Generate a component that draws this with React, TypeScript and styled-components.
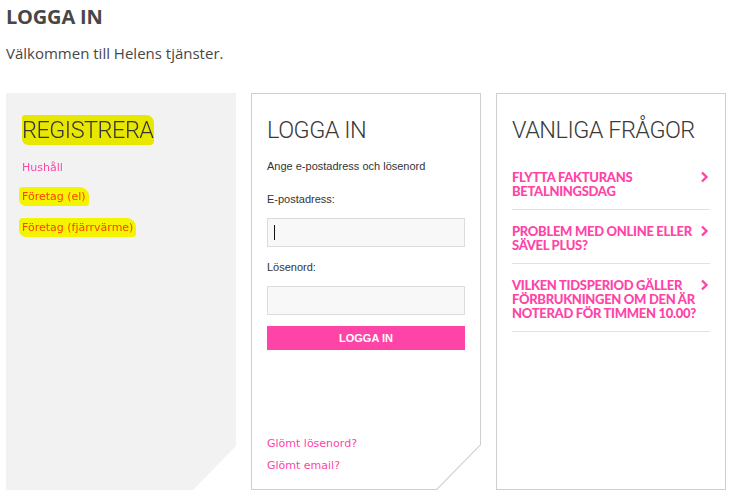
import styled, { createGlobalStyle } from 'styled-components';

const GlobalStyle = createGlobalStyle`
    body {
        margin: 0;
        background: #fff;
        font-family: "Open Sans", "Liberation Sans", sans-serif;
    }
`;

const pink = '#ff44a8';

const Page = styled.div`
    width: 737px;
    height: 500px;
    padding: 5px 6px 0;
    box-sizing: border-box;
`;

const PageTitle = styled.h1`
    margin: 0;
    font-family: "Open Sans", sans-serif;
    font-weight: 700;
    font-size: 20px;
    line-height: 24px;
    color: #474747;
    letter-spacing: -0.2px;
`;

const Intro = styled.p`
    margin: 14px 0 0;
    font-family: "Open Sans", sans-serif;
    font-size: 15px;
    line-height: 20px;
    color: #474747;
`;

const Columns = styled.div`
    display: grid;
    grid-template-columns: repeat(3, 230px);
    gap: 15px;
    margin-top: 30px;
    height: 397px;
`;

const cutCorner = (size: number) =>
    `polygon(0 0, 100% 0, 100% calc(100% - ${size + 1}px), calc(100% - ${size}px) 100%, 0 100%)`;

const GreyPanel = styled.div`
    background: #f2f2f2;
    padding: 22px 16px;
    clip-path: ${cutCorner(43)};
`;

const Frame = styled.div<{ $cut?: boolean }>`
    background: #cfcfcf;
    padding: 1px;
    display: flex;
    min-width: 0;
    clip-path: ${(p) => (p.$cut ? cutCorner(44) : 'none')};
`;

const FrameInner = styled.div<{ $cut?: boolean }>`
    flex: 1;
    min-width: 0;
    background: #fff;
    padding: 21px 15px 16px;
    display: flex;
    flex-direction: column;
    clip-path: ${(p) => (p.$cut ? cutCorner(43.6) : 'none')};
`;

const PanelTitle = styled.h2`
    margin: 0;
    font-family: Roboto, sans-serif;
    font-weight: 300;
    font-size: 23.5px;
    line-height: 30px;
    color: #3a3a3a;
    letter-spacing: -0.5px;
    white-space: nowrap;
`;

const Marker = styled.span`
    background: #f4f400;
    mix-blend-mode: multiply;
    border-radius: 3px 8px 4px 6px;
    padding: 1px 0;
`;

const LinkList = styled.div`
    display: flex;
    flex-direction: column;
    align-items: flex-start;
    gap: 12px;
    margin-top: 15px;
`;

const SmallLink = styled.a`
    font-family: "DejaVu Sans", Verdana, sans-serif;
    font-size: 11px;
    line-height: 15px;
    color: ${pink};
    text-decoration: none;
`;

const HighlightLink = styled(SmallLink)`
    color: #ff4000;
    background: #f4f400;
    padding: 2px 3px;
    margin-left: -3px;
    border-radius: 4px 9px 3px 7px;
`;

const Hint = styled.p`
    margin: 14px 0 6px;
    font-family: "Liberation Sans", Arial, sans-serif;
    font-size: 11px;
    line-height: 14px;
    color: #333;
`;

const Label = styled.label`
    display: block;
    margin-top: 13px;
    font-family: "Liberation Sans", Arial, sans-serif;
    font-size: 11px;
    line-height: 14px;
    color: #333;
`;

const Field = styled.div`
    margin-top: 12px;
    height: 29px;
    box-sizing: border-box;
    border: 1px solid #dcdcdc;
    background: #f8f8f8;
    display: flex;
    align-items: center;
    padding-left: 6px;
`;

const Caret = styled.span`
    width: 1px;
    height: 15px;
    background: #111;
`;

const Submit = styled.button`
    margin-top: 11px;
    height: 24px;
    border: none;
    background: ${pink};
    color: #fff;
    font-family: "Liberation Sans", Arial, sans-serif;
    font-weight: 700;
    font-size: 11px;
    padding: 0;
`;

const BottomLinks = styled.div`
    margin-top: auto;
    display: flex;
    flex-direction: column;
    gap: 7px;
`;

const FaqList = styled.div`
    margin-top: 25px;
`;

const FaqItem = styled.a`
    display: flex;
    justify-content: space-between;
    align-items: flex-start;
    gap: 2px;
    padding: 0 0 11px;
    margin-bottom: 14px;
    border-bottom: 1px solid #e2e2e2;
    text-decoration: none;
`;

const FaqText = styled.span`
    font-family: Lato, sans-serif;
    font-weight: 900;
    font-size: 13px;
    line-height: 14px;
    color: ${pink};
    text-transform: uppercase;
    letter-spacing: -0.3px;
`;

const Chevron = () => (
    <svg width="9" height="12" viewBox="0 0 9 12" style={{ flexShrink: 0, marginTop: 1, marginRight: 1 }}>
        <polyline points="2,1.5 6.5,6 2,10.5" fill="none" stroke={pink} strokeWidth="2.4" />
    </svg>
);

const faqs = [
    'Flytta fakturans betalningsdag',
    'Problem med Online eller Sävel Plus?',
    'Vilken tidsperiod gäller förbrukningen om den är noterad för timmen 10.00?',
];

export default function App() {
    return (
        <Page>
            <GlobalStyle />
            <PageTitle>LOGGA IN</PageTitle>
            <Intro>Välkommen till Helens tjänster.</Intro>

            <Columns>
                <GreyPanel>
                    <PanelTitle><Marker>REGISTRERA</Marker></PanelTitle>
                    <LinkList>
                        <SmallLink href="#">Hushåll</SmallLink>
                        <HighlightLink href="#">Företag (el)</HighlightLink>
                        <HighlightLink href="#">Företag (fjärrvärme)</HighlightLink>
                    </LinkList>
                </GreyPanel>

                <Frame $cut>
                    <FrameInner $cut>
                        <PanelTitle>LOGGA IN</PanelTitle>
                        <Hint>Ange e-postadress och lösenord</Hint>
                        <Label>E-postadress:</Label>
                        <Field><Caret /></Field>
                        <Label>Lösenord:</Label>
                        <Field />
                        <Submit>LOGGA IN</Submit>
                        <BottomLinks>
                            <SmallLink href="#">Glömt lösenord?</SmallLink>
                            <SmallLink href="#">Glömt email?</SmallLink>
                        </BottomLinks>
                    </FrameInner>
                </Frame>

                <Frame>
                    <FrameInner>
                        <PanelTitle>VANLIGA FRÅGOR</PanelTitle>
                        <FaqList>
                            {faqs.map((q) => (
                                <FaqItem href="#" key={q}>
                                    <FaqText>{q}</FaqText>
                                    <Chevron />
                                </FaqItem>
                            ))}
                        </FaqList>
                    </FrameInner>
                </Frame>
            </Columns>
        </Page>
    );
}
